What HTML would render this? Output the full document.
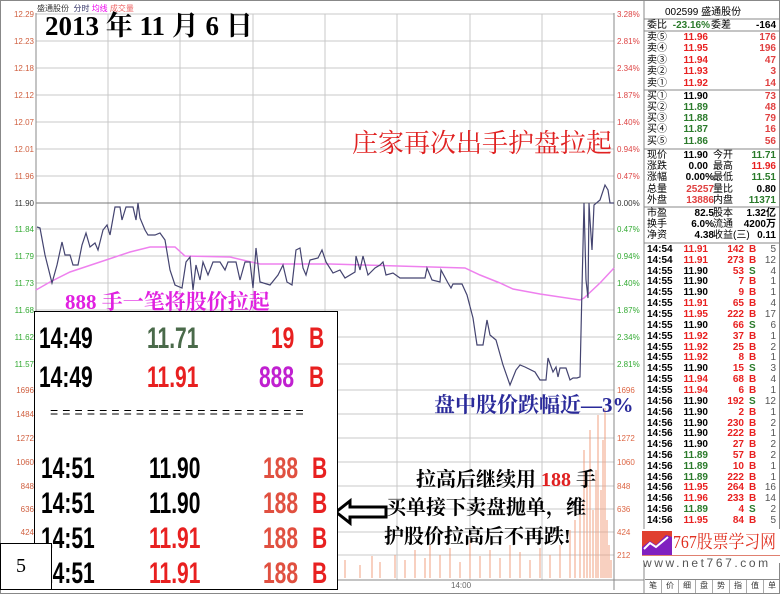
<!DOCTYPE html>
<html><head><meta charset="utf-8"><style>
*{margin:0;padding:0}
body{width:780px;height:594px;overflow:hidden;background:#fff;position:relative;font-family:"Liberation Sans","Noto Sans CJK SC",sans-serif}
.a{position:absolute;white-space:nowrap}
.ax{position:absolute;font-size:8px;color:#d06040;width:30px;text-align:right;left:4px}
.axr{position:absolute;font-size:8px;left:617px}
.r{position:absolute;left:645px;width:135px;height:11px;font-size:10px;font-weight:bold;line-height:11px}
.r span{position:absolute}
.t{left:2px}.p{right:72px}.v{right:36px}.b{left:104px}.n{right:4px;color:#555;font-weight:normal}
.R{color:#e82020}.G{color:#2a7a2a}.K{color:#000}
.big{position:absolute;font-family:"Liberation Sans",sans-serif;font-weight:bold;font-size:30px;line-height:30px;transform:scaleX(.7);transform-origin:0 0}
.ser{font-family:"Liberation Serif","Noto Serif CJK SC",serif;font-weight:bold}
</style></head><body>
<svg class="a" style="left:0;top:0" width="780" height="594">
<rect x="0.5" y="0.5" width="779" height="593" fill="none" stroke="#888"/>
<g stroke="#c8c8c8" stroke-width="1">
<line x1="36" y1="14" x2="614" y2="14"/><line x1="36" y1="41" x2="614" y2="41"/><line x1="36" y1="68" x2="614" y2="68"/><line x1="36" y1="95" x2="614" y2="95"/><line x1="36" y1="122" x2="614" y2="122"/><line x1="36" y1="149" x2="614" y2="149"/><line x1="36" y1="176" x2="614" y2="176"/><line x1="36" y1="229" x2="614" y2="229"/><line x1="36" y1="256" x2="614" y2="256"/><line x1="36" y1="283" x2="614" y2="283"/><line x1="36" y1="310" x2="614" y2="310"/><line x1="36" y1="337" x2="614" y2="337"/><line x1="36" y1="364" x2="614" y2="364"/><line x1="36" y1="390" x2="614" y2="390"/><line x1="36" y1="414" x2="614" y2="414"/><line x1="36" y1="438" x2="614" y2="438"/><line x1="36" y1="462" x2="614" y2="462"/><line x1="36" y1="486" x2="614" y2="486"/><line x1="36" y1="509" x2="614" y2="509"/><line x1="36" y1="532" x2="614" y2="532"/><line x1="36" y1="555" x2="614" y2="555"/>
<line x1="108" y1="14" x2="108" y2="580"/><line x1="180" y1="14" x2="180" y2="580"/><line x1="253" y1="14" x2="253" y2="580"/><line x1="325" y1="14" x2="325" y2="580"/><line x1="397" y1="14" x2="397" y2="580"/><line x1="470" y1="14" x2="470" y2="580"/><line x1="542" y1="14" x2="542" y2="580"/>
</g>
<line x1="36" y1="203" x2="614" y2="203" stroke="#777"/>
<line x1="36" y1="13" x2="36" y2="580" stroke="#888"/>
<line x1="614" y1="13" x2="614" y2="590" stroke="#888"/>
<line x1="644" y1="0" x2="644" y2="594" stroke="#888"/>
<line x1="36" y1="580" x2="644" y2="580" stroke="#888"/>
<line x1="644" y1="19" x2="780" y2="19" stroke="#888"/><line x1="644" y1="31" x2="780" y2="31" stroke="#888"/><line x1="644" y1="90" x2="780" y2="90" stroke="#888"/><line x1="644" y1="149" x2="780" y2="149" stroke="#888"/><line x1="644" y1="207" x2="780" y2="207" stroke="#888"/><line x1="644" y1="243" x2="780" y2="243" stroke="#888"/>
<g stroke="#f0a080" stroke-width="1">
<path d="M40 578V573M46 578V575M52 578V574M60 578V576M70 578V572M80 578V575M95 578V574M110 578V573M130 578V575M150 578V572M170 578V574M200 578V568M230 578V571M260 578V570M290 578V566M330 578V568M345 578V560M360 578V565M372 578V556M380 578V562M395 578V555M405 578V560M415 578V550M425 578V558M430 578V545M440 578V555M450 578V548M460 578V562M470 578V540M480 578V556M490 578V550M500 578V558M510 578V545M520 578V552M530 578V560M540 578V548M550 578V555M560 578V545M570 578V530M575 578V520M580 578V500M584 578V450M587 578V480M590 578V430M593 578V510M596 578V470M598 578V415M601 578V490M603 578V440M605 578V408M607 578V520M609 578V545M611 578V560"/>
</g>
<polyline fill="none" stroke="#ee80ee" stroke-width="1.5" points="36,290 50,282 70,272 100,262 130,252 150,247 175,247 185,256 230,257 260,264 330,264 465,268 480,275 500,283 513,289 540,294 580,300 584,298 600,283 614,268"/>
<polyline fill="none" stroke="#444470" stroke-width="1.2" points="37,227 40,228 45,255 52,283 57,265 62,242 65,255 70,255 73,265 78,265 82,245 86,233 90,247 95,243 98,250 103,230 107,225 110,235 115,207 120,207 122,220 126,207 133,207 136,220 138,203 140,218 145,230 148,235 155,235 160,233 165,240 170,270 175,285 182,288 186,262 190,257 193,290 196,265 200,280 203,262 208,275 213,262 220,262 225,270 228,262 236,262 240,280 245,262 250,262 253,288 256,248 260,282 270,285 278,275 283,265 287,282 292,285 296,250 300,248 303,268 306,275 310,260 318,258 322,250 326,262 333,273 340,270 345,278 355,272 356,256 360,270 363,256 368,275 375,268 380,265 383,262 386,275 393,273 400,278 410,278 425,278 427,268 432,280 440,282 441,270 448,283 451,288 453,284 462,284 467,295 473,318 477,345 483,345 487,320 490,335 496,340 503,365 510,385 516,370 520,365 525,367 535,372 540,380 546,380 548,358 553,372 556,367 558,377 560,368 566,368 570,380 573,378 577,378 580,377 582,288 584,203 586,280 588,298 589,203 590,220 592,250 594,205 600,200 605,185 608,190 610,203 614,203"/>
<path d="M336 512 L350 501 L350 507 L386 507 L386 517 L350 517 L350 523 Z" fill="#fff" stroke="#000" stroke-width="3"/>
</svg>
<div class="a" style="left:37px;top:3px;font-size:8px;color:#333">盛通股份 &nbsp;<span style="color:#336">分时</span> <span style="color:#e0e">均线</span> <span style="color:#e66">成交量</span></div>
<div class="ax" style="top:10px">12.29</div><div class="ax" style="top:37px">12.23</div><div class="ax" style="top:64px">12.18</div><div class="ax" style="top:91px">12.12</div><div class="ax" style="top:118px">12.07</div><div class="ax" style="top:145px">12.01</div><div class="ax" style="top:172px">11.96</div><div class="ax" style="top:199px;color:#333">11.90</div><div class="ax" style="top:225px;color:#3a3">11.84</div><div class="ax" style="top:252px;color:#3a3">11.79</div><div class="ax" style="top:279px;color:#3a3">11.73</div><div class="ax" style="top:306px;color:#3a3">11.68</div><div class="ax" style="top:333px;color:#3a3">11.62</div><div class="ax" style="top:360px;color:#3a3">11.57</div><div class="ax" style="top:386px">1696</div><div class="ax" style="top:410px">1484</div><div class="ax" style="top:434px">1272</div><div class="ax" style="top:458px">1060</div><div class="ax" style="top:482px">848</div><div class="ax" style="top:505px">636</div><div class="ax" style="top:528px">424</div>
<div class="axr" style="top:10px;color:#d44">3.28%</div><div class="axr" style="top:37px;color:#d44">2.81%</div><div class="axr" style="top:64px;color:#d44">2.34%</div><div class="axr" style="top:91px;color:#d44">1.87%</div><div class="axr" style="top:118px;color:#d44">1.40%</div><div class="axr" style="top:145px;color:#d44">0.94%</div><div class="axr" style="top:172px;color:#d44">0.47%</div><div class="axr" style="top:199px;color:#333">0.00%</div><div class="axr" style="top:225px;color:#3a3">0.47%</div><div class="axr" style="top:252px;color:#3a3">0.94%</div><div class="axr" style="top:279px;color:#3a3">1.40%</div><div class="axr" style="top:306px;color:#3a3">1.87%</div><div class="axr" style="top:333px;color:#3a3">2.34%</div><div class="axr" style="top:360px;color:#3a3">2.81%</div>
<div class="axr" style="top:386px;color:#d64">1696</div><div class="axr" style="top:434px;color:#d64">1272</div><div class="axr" style="top:458px;color:#d64">1060</div><div class="axr" style="top:482px;color:#d64">848</div><div class="axr" style="top:505px;color:#d64">636</div><div class="axr" style="top:528px;color:#d64">424</div><div class="axr" style="top:551px;color:#d64">212</div>
<div class="a" style="left:451px;top:581px;font-size:8px;color:#666">14:00</div>

<div class="a ser" style="left:45px;top:10px;font-size:27px;line-height:32px;color:#000">2013 年 11 月 6 日</div>
<div class="a ser" style="left:352px;top:128px;font-size:26px;line-height:32px;color:#e02020;font-weight:normal">庄家再次出手护盘拉起</div>
<div class="a ser" style="left:65px;top:290px;font-size:21px;line-height:24px;color:#e020e0">888 手一笔将股价拉起</div>
<div class="a ser" style="left:434px;top:392px;font-size:21px;line-height:26px;color:#2a2a9a">盘中股价跌幅近—3%</div>
<div class="a ser" style="left:416px;top:466px;font-size:20px;line-height:28px;color:#000">拉高后继续用 <span style="color:#e02020">188</span> 手</div>
<div class="a ser" style="left:386px;top:494px;font-size:20px;line-height:28px;color:#000">买单接下卖盘抛单，维</div>
<div class="a ser" style="left:384px;top:523px;font-size:20px;line-height:28px;color:#000">护股价拉高后不再跌!</div>

<div class="a" style="left:34px;top:311px;width:302px;height:277px;background:#fff;border:1px solid #000">
<div class="big K" style="left:4px;top:12px">14:49</div><div class="big" style="left:112px;top:12px;color:#4a6a4a">11.71</div><div class="big R" style="left:236px;top:12px">19</div><div class="big R" style="left:274px;top:12px">B</div>
<div class="big K" style="left:4px;top:51px">14:49</div><div class="big R" style="left:112px;top:51px">11.91</div><div class="big" style="left:224px;top:51px;color:#c020d0">888</div><div class="big R" style="left:274px;top:51px">B</div>
<div class="a" style="left:15px;top:92px;font-size:14px;color:#000;letter-spacing:4.1px">=====================</div>
<div class="big K" style="left:6px;top:142px">14:51</div><div class="big K" style="left:114px;top:142px">11.90</div><div class="big" style="left:228px;top:142px;color:#e05040">188</div><div class="big R" style="left:277px;top:142px">B</div>
<div class="big K" style="left:6px;top:177px">14:51</div><div class="big K" style="left:114px;top:177px">11.90</div><div class="big" style="left:228px;top:177px;color:#e05040">188</div><div class="big R" style="left:277px;top:177px">B</div>
<div class="big K" style="left:6px;top:212px">14:51</div><div class="big R" style="left:114px;top:212px">11.91</div><div class="big" style="left:228px;top:212px;color:#e05040">188</div><div class="big R" style="left:277px;top:212px">B</div>
<div class="big K" style="left:6px;top:247px">14:51</div><div class="big R" style="left:114px;top:247px">11.91</div><div class="big" style="left:228px;top:247px;color:#e05040">188</div><div class="big R" style="left:277px;top:247px">B</div>
</div>
<div class="a ser" style="left:0;top:543px;width:50px;height:45px;background:#fff;border:1px solid #000;font-size:20px;font-weight:normal;line-height:45px;text-indent:15px">5</div>

<div class="r" style="top:7px"><span style="left:20px;font-weight:normal">002599 盛通股份</span></div>
<div class="r" style="top:20px"><span class="t K" style="font-weight:normal">委比</span><span class="p G" style="right:70px">-23.16%</span><span style="left:66px;font-weight:normal">委差</span><span class="n K" style="font-weight:bold;color:#000">-164</span></div>
<div class="r" style="top:32px"><span class="t" style="font-weight:normal">卖⑤</span><span class="p R">11.96</span><span class="n R" style="font-weight:bold;color:#e04040">176</span></div>
<div class="r" style="top:43px"><span class="t" style="font-weight:normal">卖④</span><span class="p R">11.95</span><span class="n" style="font-weight:bold;color:#e04040">196</span></div>
<div class="r" style="top:55px"><span class="t" style="font-weight:normal">卖③</span><span class="p R">11.94</span><span class="n" style="font-weight:bold;color:#e04040">47</span></div>
<div class="r" style="top:66px"><span class="t" style="font-weight:normal">卖②</span><span class="p R">11.93</span><span class="n" style="font-weight:bold;color:#e04040">3</span></div>
<div class="r" style="top:78px"><span class="t" style="font-weight:normal">卖①</span><span class="p R">11.92</span><span class="n" style="font-weight:bold;color:#e04040">14</span></div>
<div class="r" style="top:91px"><span class="t" style="font-weight:normal">买①</span><span class="p K">11.90</span><span class="n" style="font-weight:bold;color:#e04040">73</span></div>
<div class="r" style="top:102px"><span class="t" style="font-weight:normal">买②</span><span class="p G">11.89</span><span class="n" style="font-weight:bold;color:#e04040">48</span></div>
<div class="r" style="top:113px"><span class="t" style="font-weight:normal">买③</span><span class="p G">11.88</span><span class="n" style="font-weight:bold;color:#e04040">79</span></div>
<div class="r" style="top:124px"><span class="t" style="font-weight:normal">买④</span><span class="p G">11.87</span><span class="n" style="font-weight:bold;color:#e04040">16</span></div>
<div class="r" style="top:136px"><span class="t" style="font-weight:normal">买⑤</span><span class="p G">11.86</span><span class="n" style="font-weight:bold;color:#e04040">56</span></div>
<div class="r" style="top:150px"><span class="t" style="font-weight:normal">现价</span><span class="p K">11.90</span><span style="left:68px;font-weight:normal">今开</span><span class="n G" style="font-weight:bold;color:#2a7a2a">11.71</span></div>
<div class="r" style="top:161px"><span class="t" style="font-weight:normal">涨跌</span><span class="p K">0.00</span><span style="left:68px;font-weight:normal">最高</span><span class="n" style="font-weight:bold;color:#e82020">11.96</span></div>
<div class="r" style="top:172px"><span class="t" style="font-weight:normal">涨幅</span><span class="p K" style="right:66px">0.00%</span><span style="left:68px;font-weight:normal">最低</span><span class="n" style="font-weight:bold;color:#2a7a2a">11.51</span></div>
<div class="r" style="top:184px"><span class="t" style="font-weight:normal">总量</span><span class="p R" style="right:66px;color:#e04040">25257</span><span style="left:68px;font-weight:normal">量比</span><span class="n" style="font-weight:bold;color:#000">0.80</span></div>
<div class="r" style="top:195px"><span class="t" style="font-weight:normal">外盘</span><span class="p R" style="right:66px;color:#e04040">13886</span><span style="left:68px;font-weight:normal">内盘</span><span class="n" style="font-weight:bold;color:#2a7a2a">11371</span></div>
<div class="r" style="top:208px"><span class="t" style="font-weight:normal">市盈</span><span class="p K" style="right:66px">82.5</span><span style="left:68px;font-weight:normal">股本</span><span class="n" style="font-weight:bold;color:#000">1.32亿</span></div>
<div class="r" style="top:219px"><span class="t" style="font-weight:normal">换手</span><span class="p K" style="right:66px">6.0%</span><span style="left:68px;font-weight:normal">流通</span><span class="n" style="font-weight:bold;color:#000">4200万</span></div>
<div class="r" style="top:230px"><span class="t" style="font-weight:normal">净资</span><span class="p K" style="right:66px">4.38</span><span style="left:68px;font-weight:normal">收益(三)</span><span class="n" style="font-weight:bold;color:#000">0.11</span></div>

<div class="r" style="top:244px"><span class="t">14:54</span><span class="p R">11.91</span><span class="v R">142</span><span class="b R">B</span><span class="n">5</span></div>
<div class="r" style="top:255px"><span class="t">14:54</span><span class="p R">11.91</span><span class="v R">273</span><span class="b R">B</span><span class="n">12</span></div>
<div class="r" style="top:266px"><span class="t">14:55</span><span class="p K">11.90</span><span class="v R">53</span><span class="b G">S</span><span class="n">4</span></div>
<div class="r" style="top:276px"><span class="t">14:55</span><span class="p K">11.90</span><span class="v R">7</span><span class="b R">B</span><span class="n">1</span></div>
<div class="r" style="top:287px"><span class="t">14:55</span><span class="p K">11.90</span><span class="v R">9</span><span class="b R">B</span><span class="n">1</span></div>
<div class="r" style="top:298px"><span class="t">14:55</span><span class="p R">11.91</span><span class="v R">65</span><span class="b R">B</span><span class="n">4</span></div>
<div class="r" style="top:309px"><span class="t">14:55</span><span class="p R">11.95</span><span class="v R">222</span><span class="b R">B</span><span class="n">17</span></div>
<div class="r" style="top:320px"><span class="t">14:55</span><span class="p K">11.90</span><span class="v R">66</span><span class="b G">S</span><span class="n">6</span></div>
<div class="r" style="top:331px"><span class="t">14:55</span><span class="p R">11.92</span><span class="v R">37</span><span class="b R">B</span><span class="n">1</span></div>
<div class="r" style="top:342px"><span class="t">14:55</span><span class="p R">11.92</span><span class="v R">25</span><span class="b R">B</span><span class="n">2</span></div>
<div class="r" style="top:352px"><span class="t">14:55</span><span class="p R">11.92</span><span class="v R">8</span><span class="b R">B</span><span class="n">1</span></div>
<div class="r" style="top:363px"><span class="t">14:55</span><span class="p K">11.90</span><span class="v R">15</span><span class="b G">S</span><span class="n">3</span></div>
<div class="r" style="top:374px"><span class="t">14:55</span><span class="p R">11.94</span><span class="v R">68</span><span class="b R">B</span><span class="n">4</span></div>
<div class="r" style="top:385px"><span class="t">14:55</span><span class="p R">11.94</span><span class="v R">6</span><span class="b R">B</span><span class="n">1</span></div>
<div class="r" style="top:396px"><span class="t">14:56</span><span class="p K">11.90</span><span class="v R">192</span><span class="b G">S</span><span class="n">12</span></div>
<div class="r" style="top:407px"><span class="t">14:56</span><span class="p K">11.90</span><span class="v R">2</span><span class="b R">B</span><span class="n">1</span></div>
<div class="r" style="top:418px"><span class="t">14:56</span><span class="p K">11.90</span><span class="v R">230</span><span class="b R">B</span><span class="n">2</span></div>
<div class="r" style="top:428px"><span class="t">14:56</span><span class="p K">11.90</span><span class="v R">222</span><span class="b R">B</span><span class="n">1</span></div>
<div class="r" style="top:439px"><span class="t">14:56</span><span class="p K">11.90</span><span class="v R">27</span><span class="b R">B</span><span class="n">2</span></div>
<div class="r" style="top:450px"><span class="t">14:56</span><span class="p G">11.89</span><span class="v R">57</span><span class="b R">B</span><span class="n">2</span></div>
<div class="r" style="top:461px"><span class="t">14:56</span><span class="p G">11.89</span><span class="v R">10</span><span class="b R">B</span><span class="n">1</span></div>
<div class="r" style="top:472px"><span class="t">14:56</span><span class="p G">11.89</span><span class="v R">222</span><span class="b R">B</span><span class="n">1</span></div>
<div class="r" style="top:482px"><span class="t">14:56</span><span class="p R">11.95</span><span class="v R">264</span><span class="b R">B</span><span class="n">16</span></div>
<div class="r" style="top:493px"><span class="t">14:56</span><span class="p R">11.96</span><span class="v R">233</span><span class="b R">B</span><span class="n">14</span></div>
<div class="r" style="top:504px"><span class="t">14:56</span><span class="p G">11.89</span><span class="v R">4</span><span class="b G">S</span><span class="n">2</span></div>
<div class="r" style="top:515px"><span class="t">14:56</span><span class="p R">11.95</span><span class="v R">84</span><span class="b R">B</span><span class="n">5</span></div>

<div class="a" style="left:640px;top:529px;width:140px;height:34px;background:#fff"></div>
<svg class="a" style="left:642px;top:531px" width="30" height="24"><rect width="30" height="24" fill="#e04030"/><path d="M0 24 L0 16 L8 10 L14 14 L24 4 L30 6 L30 24Z" fill="#8020c0"/><path d="M2 18 L8 12 L14 16 L26 6" stroke="#fff" stroke-width="2" fill="none"/></svg>
<div class="a ser" style="left:673px;top:530px;font-size:18px;line-height:24px;color:#e03020;font-weight:normal;transform:scaleX(.88);transform-origin:0 0">767股票学习网</div>
<div class="a" style="left:642px;top:555px;width:138px;height:1px;background:#e08070"></div>
<div class="a" style="left:643px;top:556px;font-size:12px;letter-spacing:2.6px;color:#555">www.net767.com</div>
<div class="a" style="left:645px;top:579px;width:135px;height:13px;border-top:1px solid #888;font-size:8px;color:#333;display:flex">
<span style="flex:1;text-align:center;border-right:1px solid #aaa">笔</span><span style="flex:1;text-align:center;border-right:1px solid #aaa">价</span><span style="flex:1;text-align:center;border-right:1px solid #aaa">细</span><span style="flex:1;text-align:center;border-right:1px solid #aaa">盘</span><span style="flex:1;text-align:center;border-right:1px solid #aaa">势</span><span style="flex:1;text-align:center;border-right:1px solid #aaa">指</span><span style="flex:1;text-align:center;border-right:1px solid #aaa">值</span><span style="flex:1;text-align:center">单</span></div>
</body></html>
